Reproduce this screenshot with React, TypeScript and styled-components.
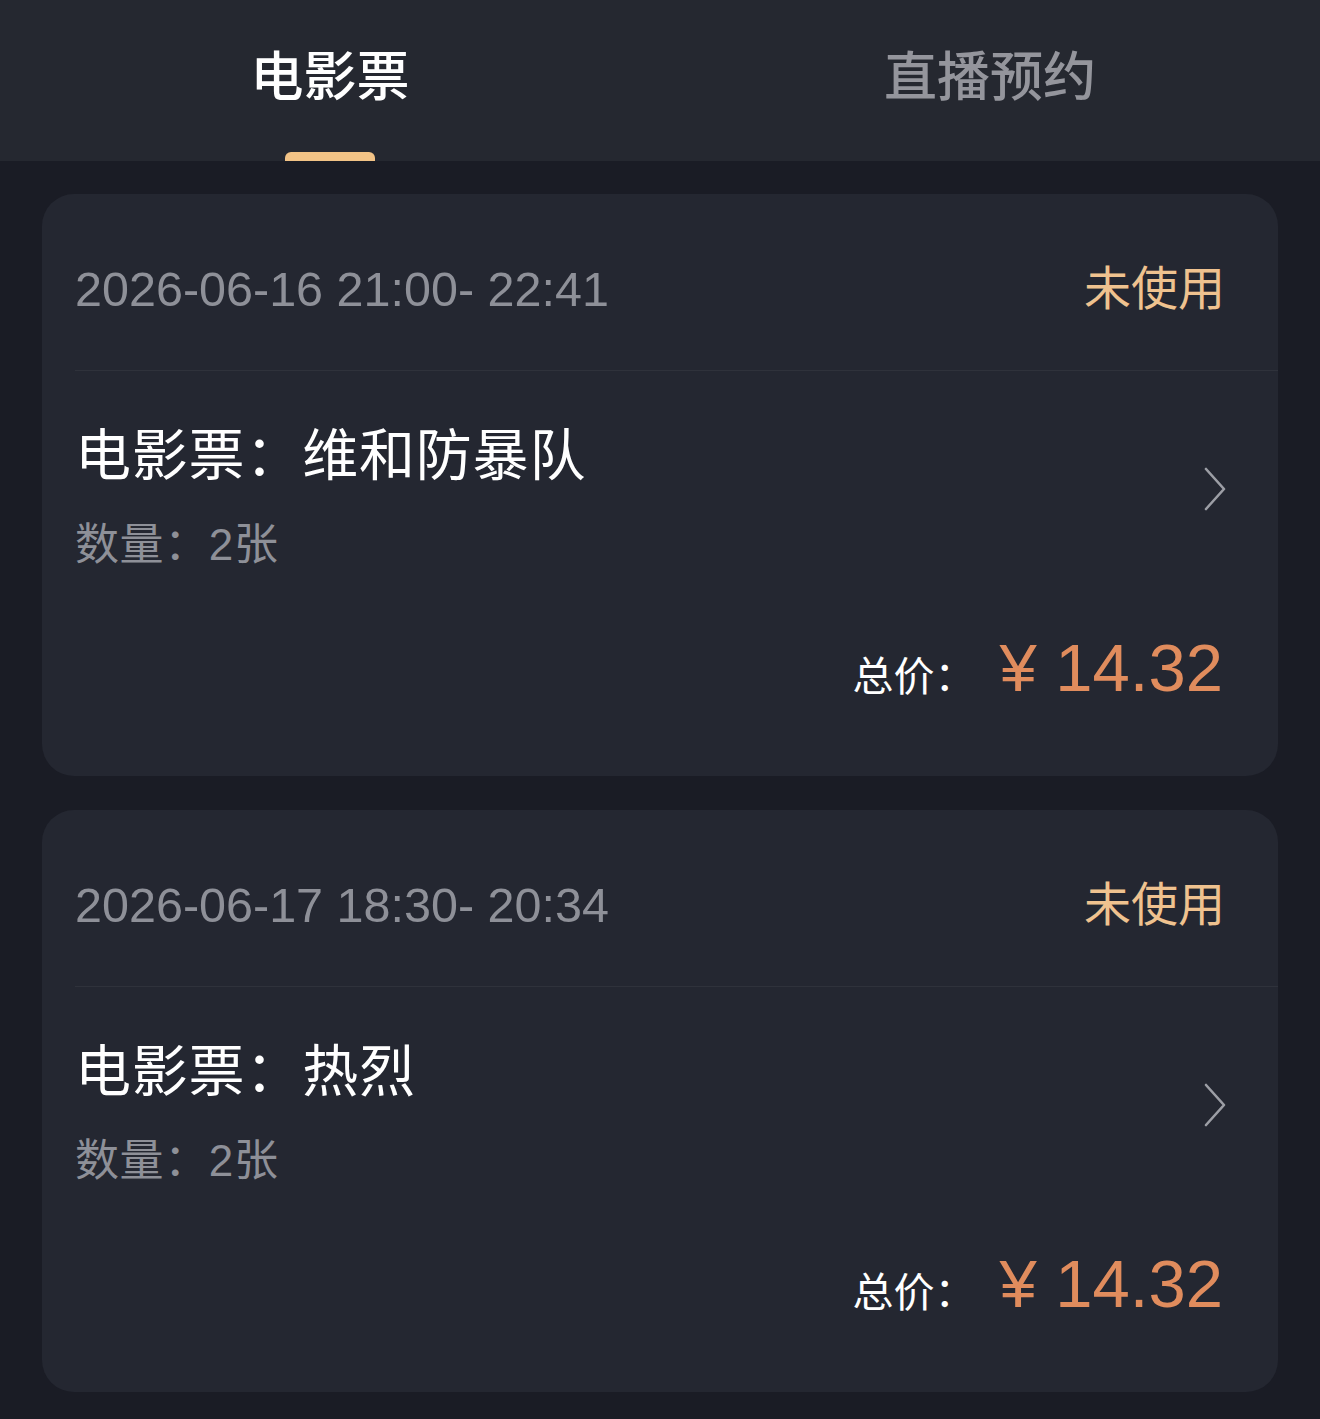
import React, { useState } from 'react'
import styled, { createGlobalStyle } from 'styled-components'

type Ticket = {
  id: number
  time: string
  status: string
  movie: string
  count: number
  total: string
}

const tickets: Ticket[] = [
  { id: 1, time: '2026-06-16 21:00- 22:41', status: '未使用', movie: '维和防暴队', count: 2, total: '14.32' },
  { id: 2, time: '2026-06-17 18:30- 20:34', status: '未使用', movie: '热烈', count: 2, total: '14.32' },
]

const tabs = ['电影票', '直播预约']

export default function App() {
  const [active, setActive] = useState<number>(0)

  return (
    <>
      <GlobalStyle />
      <Page>
        <TabBar>
          {tabs.map((t, i) => (
            <Tab key={t} active={i === active} onClick={() => setActive(i)}>
              {t}
              {i === active && <Indicator />}
            </Tab>
          ))}
        </TabBar>

        <List>
          {tickets.map((item) => (
            <Card key={item.id}>
              <CardHead>
                <TimeText>{item.time}</TimeText>
                <StatusText>{item.status}</StatusText>
              </CardHead>
              <CardBody>
                <Info>
                  <Title>电影票：{item.movie}</Title>
                  <Count>数量：{item.count}张</Count>
                </Info>
                <ArrowIcon viewBox="0 0 24 44" fill="none">
                  <polyline points="3,2 21,22 3,42" stroke="#9c9ea5" strokeWidth="2.6" strokeLinecap="round" strokeLinejoin="round" />
                </ArrowIcon>
              </CardBody>
              <CardFoot>
                <TotalLabel>总价：</TotalLabel>
                <Price>¥ {item.total}</Price>
              </CardFoot>
            </Card>
          ))}
        </List>
      </Page>
    </>
  )
}

const GlobalStyle = createGlobalStyle`
  html, body {
    margin: 0;
    padding: 0;
    background: #1a1c25;
  }
  body {
    font-family: "Liberation Sans", "Noto Sans CJK SC", sans-serif;
  }
`

const Page = styled.div`
  width: 1320px;
  min-height: 1419px;
  background: #1a1c25;
`

const TabBar = styled.nav`
  display: grid;
  grid-template-columns: 1fr 1fr;
  height: 161px;
  background: #252830;
`

const Tab = styled.div<{ active: boolean }>`
  position: relative;
  display: flex;
  justify-content: center;
  padding-top: 41px;

  color: ${({ active }) => (active ? '#ffffff' : '#94959c')};
  font-family: "Noto Sans CJK SC", sans-serif;
  font-size: 53px;
  line-height: 64px;
  font-weight: 500;

  cursor: pointer;
`

const Indicator = styled.span`
  position: absolute;
  bottom: 0;
  left: 50%;
  transform: translateX(-50%);

  width: 90px;
  height: 9px;

  border-radius: 6px 6px 0 0;
  background: #f2c386;
`

const List = styled.section`
  display: flex;
  flex-direction: column;
  gap: 34px;

  padding: 33px 42px 27px 42px;
`

const Card = styled.article`
  height: 582px;
  box-sizing: border-box;

  border-radius: 32px;
  background: #242731;

  overflow: hidden;
`

const CardHead = styled.div`
  display: flex;
  justify-content: space-between;
  align-items: center;

  height: 177px;
  margin-left: 33px;
  padding: 12px 55px 0 0;
  box-sizing: border-box;

  border-bottom: 1px solid #2f323b;
`

const TimeText = styled.span`
  color: #8e9098;
  font-size: 48.5px;
  margin-top: 2px;
`

const StatusText = styled.span`
  color: #efc28f;
  font-family: "Noto Sans CJK SC", sans-serif;
  font-size: 47px;
  margin: -7px -2px 0 0;
`

const CardBody = styled.div`
  display: flex;
  justify-content: space-between;
  align-items: center;

  padding: 48px 51px 0 33px;
`

const Info = styled.div`
  display: flex;
  flex-direction: column;
  gap: 34px;
`

const Title = styled.h3`
  margin: 0;

  color: #ffffff;
  font-family: "Noto Sans CJK SC", sans-serif;
  font-size: 56px;
  font-weight: 400;
  line-height: 64px;
  letter-spacing: 0.8px;
`

const Count = styled.p`
  margin: 0;

  color: #8e9098;
  font-family: "Liberation Sans", "Noto Sans CJK SC", sans-serif;
  font-size: 44px;
  line-height: 56px;
  letter-spacing: 0.6px;
`

const ArrowIcon = styled.svg`
  width: 24px;
  height: 44px;
  margin-top: -14px;
`

const CardFoot = styled.div`
  display: flex;
  justify-content: flex-end;
  align-items: baseline;

  padding: 55px 55px 0 0;
`

const TotalLabel = styled.span`
  margin-right: 24px;

  color: #ffffff;
  font-family: "Noto Sans CJK SC", sans-serif;
  font-size: 41px;
`

const Price = styled.span`
  color: #e08c5d;
  font-size: 67px;
  line-height: 80px;
`
